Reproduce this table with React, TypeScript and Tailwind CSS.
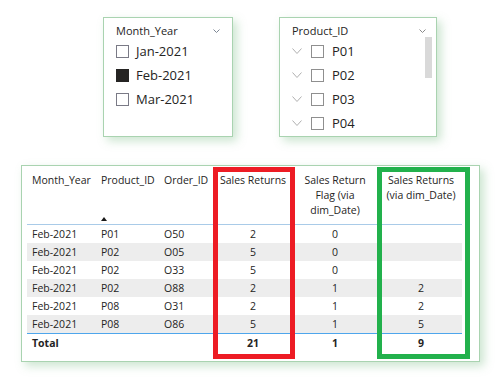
import React from "react";

const rows = [
  ["Feb-2021", "P01", "O50", "2", "0", ""],
  ["Feb-2021", "P02", "O05", "5", "0", ""],
  ["Feb-2021", "P02", "O33", "5", "0", ""],
  ["Feb-2021", "P02", "O88", "2", "1", "2"],
  ["Feb-2021", "P08", "O31", "2", "1", "2"],
  ["Feb-2021", "P08", "O86", "5", "1", "5"],
];

function Chevron({ color = "#8a8a8a", w = 9, h = 5 }: { color?: string; w?: number; h?: number }) {
  return (
    <svg width={w} height={h} viewBox={`0 0 ${w} ${h}`} className="block">
      <polyline points={`0.5,0.5 ${w / 2},${h - 0.5} ${w - 0.5},0.5`} fill="none" stroke={color} strokeWidth="1" />
    </svg>
  );
}

function Box({ checked, light }: { checked?: boolean; light?: boolean }) {
  return (
    <div
      className={
        "w-[13px] h-[13px] shrink-0 border " +
        (checked ? "bg-[#252423] border-[#252423]" : light ? "bg-white border-[#8f8f8f]" : "bg-white border-[#7a7a86]")
      }
    />
  );
}

export default function App() {
  const cols = ["w-[69px]", "w-[63px]", "w-[57px]", "w-[74px]", "w-[90px]", "w-[82px]"];
  return (
    <div className="w-[499px] h-[379px] bg-white text-[#252423] overflow-hidden" style={{ fontFamily: "'Open Sans', 'Noto Sans', sans-serif" }}>
      <div className="flex gap-[46px] pl-[103px] pt-[17px]">
        {/* Month_Year slicer */}
        <div className="w-[130px] h-[120px] border border-[#a9d3b0] bg-white shadow-[4px_4px_9px_rgba(110,180,120,0.35)] pl-[12px] pr-[12px] pt-[4px]">
          <div className="flex items-center justify-between h-[16px] mt-[1px]">
            <span className="text-[11px] leading-[16px]">Month_Year</span>
            <Chevron color="#7d8794" w={7} h={4} />
          </div>
          {[
            ["Jan-2021", false],
            ["Feb-2021", true],
            ["Mar-2021", false],
          ].map(([t, c]) => (
            <div key={t as string} className="flex items-center gap-[7px] h-[24px]">
              <Box checked={c as boolean} />
              <span className="text-[13px] leading-[16px]">{t as string}</span>
            </div>
          ))}
        </div>
        {/* Product_ID slicer */}
        <div className="relative w-[158px] h-[120px] border border-[#a9d3b0] bg-white shadow-[4px_4px_9px_rgba(110,180,120,0.35)] pl-[12px] pr-[10px] pt-[4px]">
          <div className="flex items-center justify-between h-[16px] mt-[1px]">
            <span className="text-[11px] leading-[16px]">Product_ID</span>
            <Chevron color="#8a8a8a" w={7} h={4} />
          </div>
          {["P01", "P02", "P03", "P04"].map((p) => (
            <div key={p} className="flex items-center h-[24px]">
              <Chevron color="#b0b0b0" w={10} h={6} />
              <div className="ml-[9px]">
                <Box light />
              </div>
              <span className="ml-[8px] text-[13px] leading-[16px]">{p}</span>
            </div>
          ))}
          <div className="absolute left-[145px] top-[19px] w-[7px] h-[41px] bg-[#d9d9d9]" />
        </div>
      </div>

      {/* Table visual */}
      <div className="relative ml-[21px] mt-[28px] w-[459px] h-[197px] border border-[#a9d3b0] bg-white shadow-[4px_4px_9px_rgba(110,180,120,0.35)] pl-[5px]">
        <div className="w-[435px] text-[10.5px] leading-[15px]">
          {/* header */}
          <div className="flex h-[59px] border-b border-[#a9cbe8]">
            <div className={cols[0] + " pl-[5px] pt-[7px]"}>Month_Year</div>
            <div className={cols[1] + " pl-[5px] pt-[7px] flex flex-col"}>
              <span>Product_ID</span>
              <div className="mt-auto mb-[3px] w-0 h-0 border-l-[3.5px] border-r-[3.5px] border-b-[4px] border-l-transparent border-r-transparent border-b-[#1a1a1a]" />
            </div>
            <div className={cols[2] + " pl-[5px] pt-[7px]"}>Order_ID</div>
            <div className={cols[3] + " pt-[7px] text-center"}>Sales Returns</div>
            <div className={cols[4] + " pt-[7px] text-center"}>
              Sales Return
              <br />
              Flag (via
              <br />
              dim_Date)
            </div>
            <div className={cols[5] + " pt-[7px] text-center"}>
              Sales Returns
              <br />
              (via dim_Date)
            </div>
          </div>
          {rows.map((r, i) => (
            <div key={i} className={"flex h-[18px] items-center " + (i % 2 === 1 ? "bg-[#ededed]" : "bg-white")}>
              <div className={cols[0] + " pl-[5px]"}>{r[0]}</div>
              <div className={cols[1] + " pl-[5px]"}>{r[1]}</div>
              <div className={cols[2] + " pl-[5px]"}>{r[2]}</div>
              <div className={cols[3] + " text-center"}>{r[3]}</div>
              <div className={cols[4] + " text-center"}>{r[4]}</div>
              <div className={cols[5] + " text-center"}>{r[5]}</div>
            </div>
          ))}
          <div className="flex h-[20px] items-center border-t border-[#4ea6ec] font-bold">
            <div className={cols[0] + " pl-[5px]"}>Total</div>
            <div className={cols[1]} />
            <div className={cols[2]} />
            <div className={cols[3] + " text-center"}>21</div>
            <div className={cols[4] + " text-center"}>1</div>
            <div className={cols[5] + " text-center"}>9</div>
          </div>
        </div>
        {/* annotation boxes */}
        <div className="absolute left-[191px] top-[1px] w-[82px] h-[192px] border-[5px] border-[#ed1c24]" />
        <div className="absolute left-[355px] top-[1px] w-[93px] h-[192px] border-[5px] border-[#22b14c]" />
      </div>
    </div>
  );
}
